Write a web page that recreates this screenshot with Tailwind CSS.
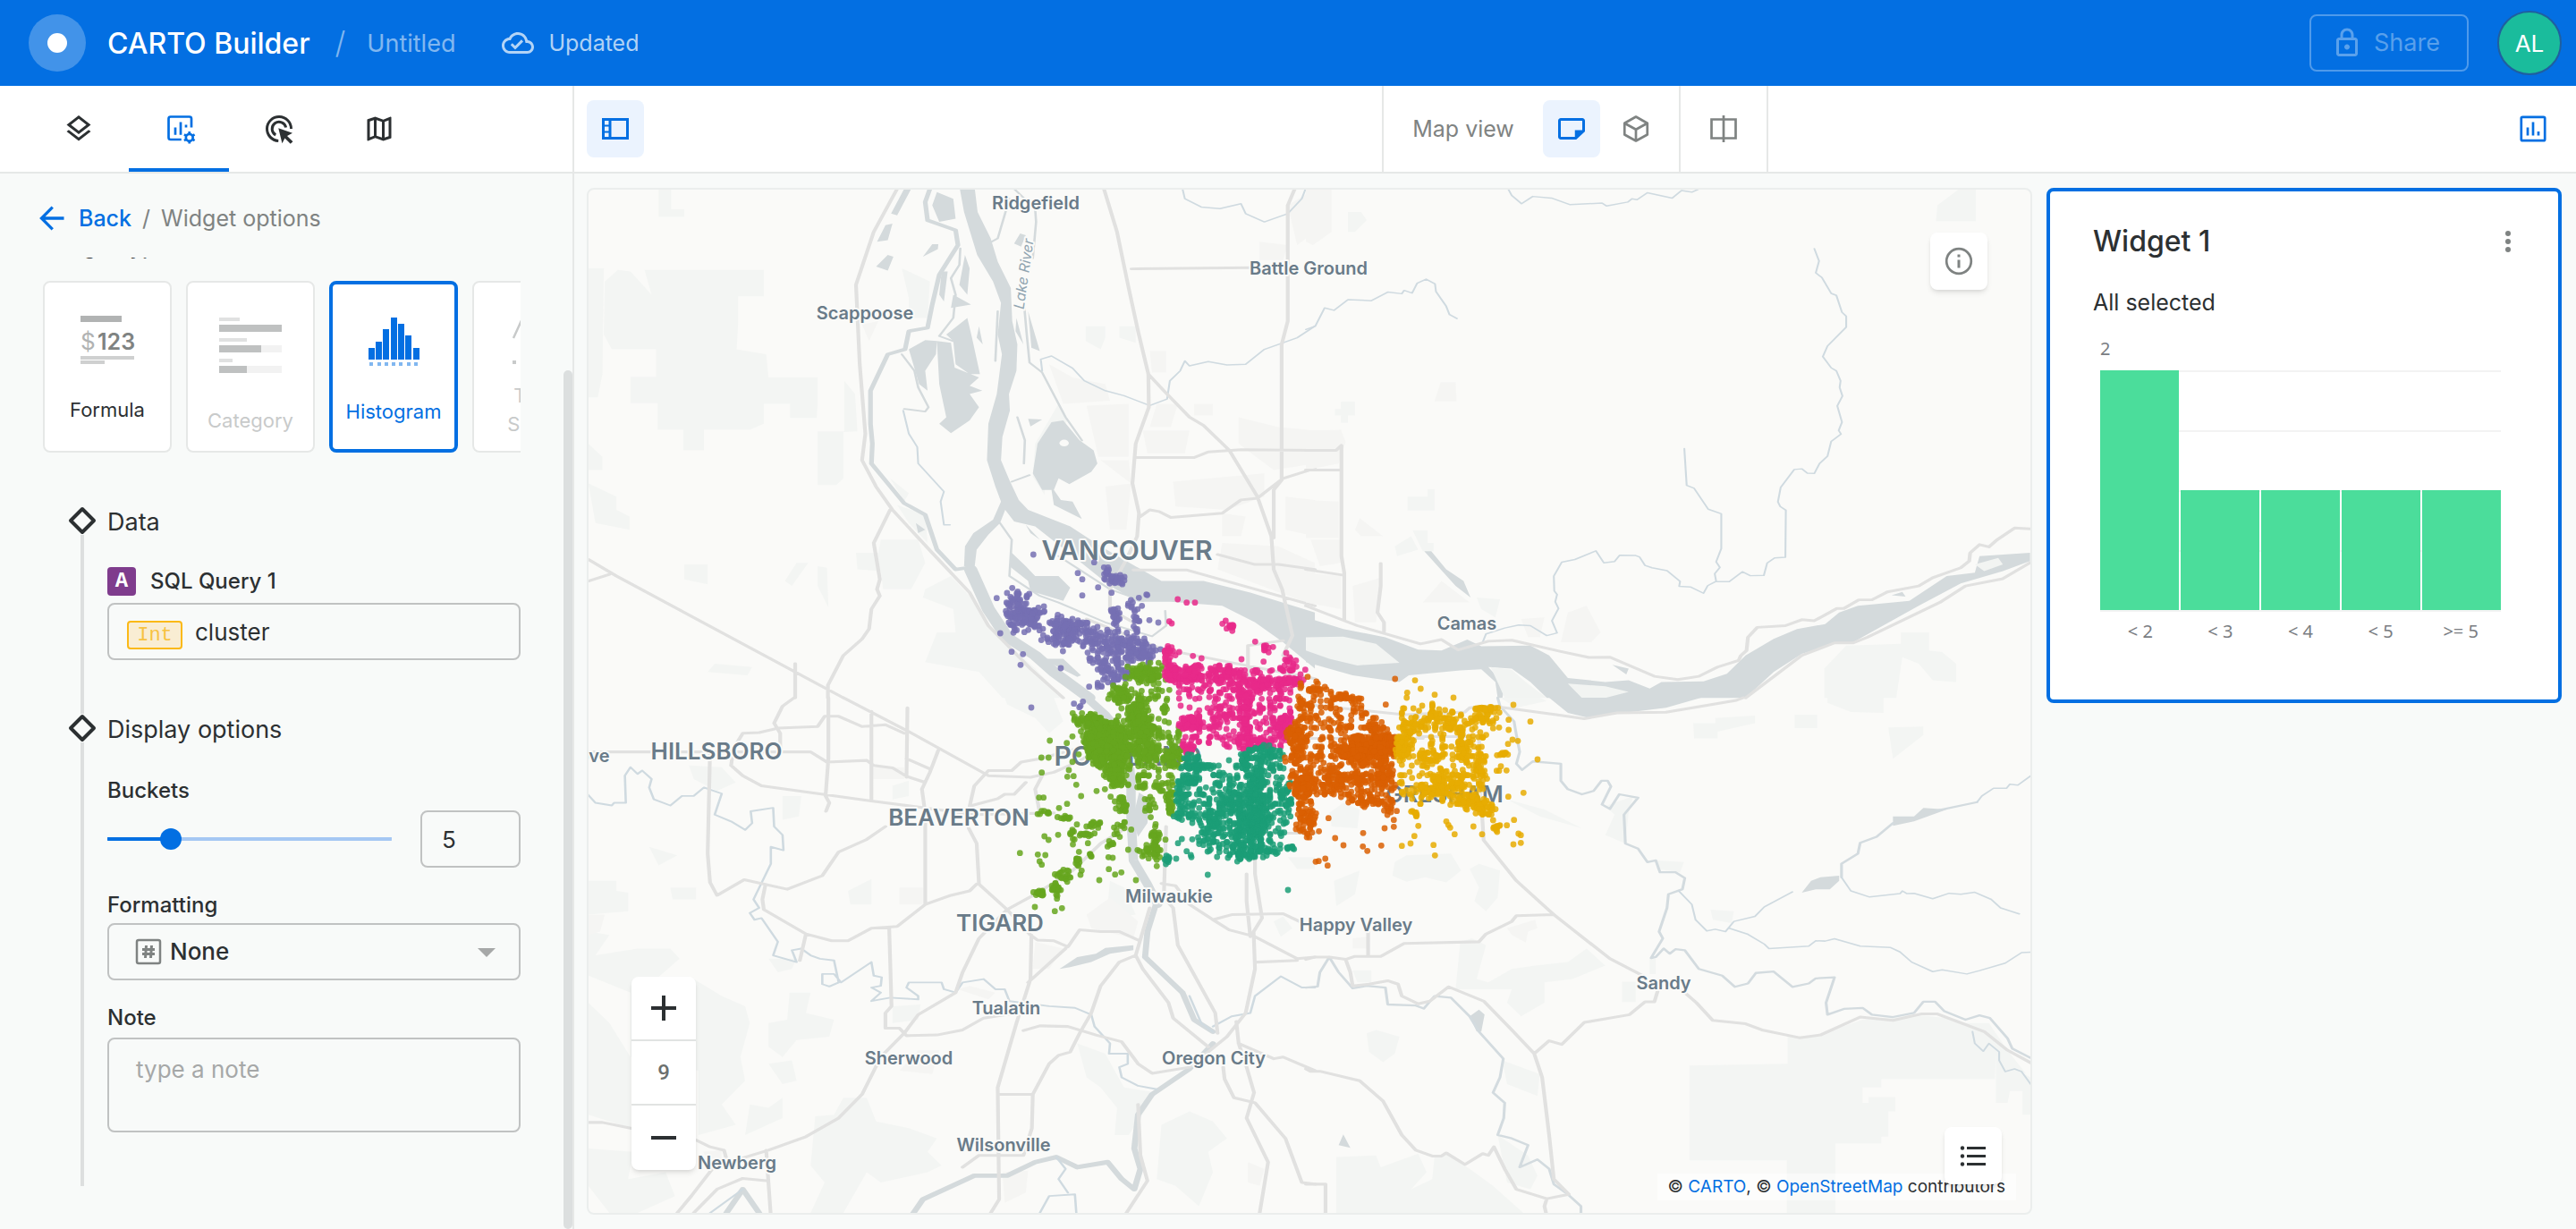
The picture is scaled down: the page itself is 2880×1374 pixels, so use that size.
<!DOCTYPE html>
<html lang="en">
<head>
<meta charset="utf-8">
<title>CARTO Builder</title>
<script src="https://cdn.jsdelivr.net/npm/@tailwindcss/browser@4"></script>
</head>
<body class="flex h-screen min-h-[1374px] flex-col overflow-hidden bg-[#f8faf9] font-['Inter','Liberation_Sans',sans-serif] text-[#2c3032]">

<header class="flex h-24 shrink-0 items-center bg-[#036fe2] pl-8 pr-4 text-white">
  <a href="#" aria-label="CARTO home" class="flex size-16 items-center justify-center rounded-full bg-white/25"><span class="size-[22px] rounded-full bg-white"></span></a>
  <h1 class="ml-6 pt-0.5 text-[32px] font-medium leading-10">CARTO Builder</h1>
  <span class="ml-7 text-[34px] font-light leading-10 text-white/50">/</span>
  <span class="ml-6 pt-0.5 text-[27px] leading-8 text-white/50">Untitled</span>
  <svg class="ml-[52px] size-9 text-white/70" viewBox="0 0 24 24" fill="currentColor"><path d="M19.35 10.04C18.67 6.59 15.64 4 12 4 9.11 4 6.6 5.64 5.35 8.04 2.34 8.36 0 10.91 0 14c0 3.31 2.69 6 6 6h13c2.76 0 5-2.24 5-5 0-2.64-2.05-4.78-4.65-4.96zM19 18H6c-2.21 0-4-1.79-4-4 0-2.05 1.53-3.76 3.56-3.97l1.07-.11.5-.95C8.08 7.14 9.94 6 12 6c2.62 0 4.88 1.86 5.39 4.43l.3 1.5 1.53.11c1.56.1 2.78 1.41 2.78 2.96 0 1.65-1.35 3-3 3zm-9-3.82l-2.09-2.09L6.5 13.5 10 17l6.01-6.01-1.41-1.41z"/></svg>
  <span class="ml-4 text-[25px] leading-8 text-white/70">Updated</span>
  <button type="button" class="ml-auto flex h-16 w-[178px] items-center gap-3 rounded-lg border-2 border-white/30 pl-[22px] text-[27px] text-white/35">
    <svg class="size-9" viewBox="0 0 24 24" fill="currentColor"><path d="M18 8h-1V6c0-2.76-2.24-5-5-5S7 3.24 7 6v2H6c-1.100 0-2 .9-2 2v10c0 1.100.9 2 2 2h12c1.100 0 2-.9 2-2V10c0-1.100-.9-2-2-2zM9 6c0-1.660 1.340-3 3-3s3 1.340 3 3v2H9V6zm9 14H6V10h12v10zm-6-3c1.100 0 2-.9 2-2s-.9-2-2-2-2 .9-2 2 .9 2 2 2z"/></svg>
    Share
  </button>
  <button type="button" aria-label="Account" class="ml-8 flex size-[72px] items-center justify-center rounded-full border-2 border-[#1f5f9f] bg-[#1abc9c] text-[26px]">AL</button>
</header>

<div class="flex min-h-0 flex-1">
  <aside class="relative flex w-[642px] shrink-0 flex-col border-r-2 border-[#e6e8e7]">
    <nav class="flex h-[98px] shrink-0 border-b-2 border-[#e6e8e7] bg-white px-8">
      <button type="button" aria-label="Layers" class="flex w-28 items-center justify-center"><svg class="size-9" viewBox="0 0 24 24" fill="currentColor"><path d="M11.990 18.540l-7.370-5.730L3 14.070l9 7 9-7-1.630-1.270zM12 16l7.360-5.730L21 9l-9-7-9 7 1.630 1.270L12 16zm0-11.470L17.740 9 12 13.470 6.260 9 12 4.530z"/></svg></button>
      <button type="button" aria-label="Widgets" class="flex w-28 items-center justify-center border-b-4 border-[#036fe2] pl-1 pt-1 text-[#036fe2]"><svg class="size-9" viewBox="0 0 24 24" fill="none" stroke="currentColor" stroke-width="1.800"><path d="M20 11V4.500Q20 3 18.500 3H4.500Q3 3 3 4.500V18.500Q3 20 4.500 20H12.500M8 16.500V11M12 16.500V7M16 11V9"/><circle cx="18.500" cy="18.500" r="2.600"/><path d="M18.500 14v2M18.500 21v2M14.600 16.300l1.700 1M20.700 19.700l1.700 1M14.600 20.700l1.700-1M20.700 17.300l1.700-1"/></svg></button>
      <button type="button" aria-label="Interactions" class="flex w-28 items-center justify-center"><svg class="size-9" viewBox="0 0 24 24" fill="none" stroke="currentColor" stroke-width="2"><path d="M11.500 21A9 9 0 1 1 21 12M9.500 16.600A5.200 5.200 0 1 1 17.100 11"/><path d="M11.500 11.500l10.500 3.700-4 2.100 4.300 4.200-1.800 1.700-4.200-4.200-2 3.900z" fill="currentColor" stroke="none"/></svg></button>
      <button type="button" aria-label="Basemap" class="flex w-28 items-center justify-center"><svg class="size-9" viewBox="0 0 24 24" fill="currentColor"><path d="M20.500 3l-.16.030L15 5.100 9 3 3.360 4.900c-.21.070-.36.250-.36.480V20.500c0 .28.220.5.500.5l.16-.030L9 18.900l6 2.100 5.640-1.900c.21-.070.360-.250.360-.480V3.500c0-.28-.22-.5-.5-.5zM10 5.470l4 1.400v11.660l-4-1.400V5.470zm-5 .990l3-1.010v11.700l-3 1.160V6.460zm14 11.080l-3 1.010V6.860l3-1.160v11.840z"/></svg></button>
    </nav>
    <div class="flex h-[94px] shrink-0 items-center pl-10 pt-1.5 text-[25px] leading-8 text-[#7f8382]">
      <svg class="size-9 text-[#036fe2]" viewBox="0 0 24 24" fill="none" stroke="currentColor" stroke-width="2.200"><path d="M21 12H4.500M12.500 3.800L4.300 12l8.200 8.200"/></svg>
      <a href="#" class="ml-3 font-medium text-[#036fe2]">Back</a><span class="mx-3">/</span><span>Widget options</span>
    </div>

    <div class="min-h-0 flex-1 overflow-hidden">
      <div class="ml-12 mr-[58px]">
        <h2 class="-mt-7 text-[24px] font-medium leading-8">Widget type</h2>
        <div class="mt-[22px] flex gap-4 overflow-hidden text-[22px] leading-8">
          <button type="button" class="flex h-48 w-36 shrink-0 flex-col items-center rounded-lg border-2 border-[#e6e8e7] bg-white pt-[34px]">
            <svg class="size-16" viewBox="88 350 64 64"><path fill="#b1b3b3" d="M90 353h46v7H90z"/><path fill="#cfd0d0" d="M90 398h60v4H90zM90 403h27v4H90z"/><text x="90" y="391" font-size="26" fill="#b1b3b3">$</text><text x="109" y="391" font-size="25" font-weight="600" fill="#7f8382">123</text></svg>
            <span class="mt-7">Formula</span>
          </button>
          <button type="button" disabled class="flex h-48 w-36 shrink-0 flex-col items-center rounded-lg border-2 border-[#e6e8e7] bg-white pt-[34px] text-[#c8caca]">
            <svg class="size-20" viewBox="240 350 80 80"><path fill="#e0e1e1" d="M245 355h23v4h-23zM245 378h31v4h-31zM245 401h15v4h-15z"/><path fill="#f2f2f2" d="M245 386h70v8h-70zM245 409h70v8h-70z"/><path fill="#bfc1c1" d="M245 363h70v8h-70zM245 386h47v8h-47zM245 409h31v8h-31z"/></svg>
            <span class="mt-6">Category</span>
          </button>
          <button type="button" aria-pressed="true" class="flex h-48 w-36 shrink-0 flex-col items-center rounded-lg border-4 border-[#036fe2] bg-white pt-8 text-[#036fe2]">
            <svg class="size-16" viewBox="408 350 64 64" fill="currentColor"><path d="M412 389h7v13h-7zM420 382h7v20h-7zM428 368h7v34h-7zM437 355h7v47h-7zM445 362h7v40h-7zM453 375h7v27h-7zM462 389h7v13h-7z"/><path opacity=".5" d="M413 405h4v4h-4zM422 405h4v4h-4zM430 405h4v4h-4zM438 405h4v4h-4zM446 405h4v4h-4zM455 405h4v4h-4zM463 405h4v4h-4z"/></svg>
            <span class="mt-[30px]">Histogram</span>
          </button>
          <button type="button" disabled class="flex h-48 w-36 shrink-0 flex-col items-center rounded-lg border-2 border-[#e6e8e7] bg-white pt-[34px] text-[#c8caca]">
            <svg class="size-16" viewBox="568 350 64 64" fill="none" stroke="currentColor" stroke-width="2.500"><path d="M574 378l10-22 12 14 14-18 14 22"/><path stroke-width="4" stroke-dasharray="4 5" d="M573 405h54"/></svg>
            <span class="mt-3 w-20">Time Series</span>
          </button>
        </div>
      </div>

      <section>
        <div class="mt-[60px] flex h-8 items-center gap-3 pl-[76px]">
          <svg class="size-8" viewBox="0 0 32 32" fill="none" stroke="currentColor" stroke-width="4" stroke-linejoin="round"><path d="M16 3l13 13-13 13L3 16z"/></svg>
          <h3 class="pt-1 text-[27px] leading-8">Data</h3>
        </div>
        <div class="ml-[90px] mr-[58px] border-l-4 border-[#dddfdf] pb-[60px] pl-[26px] pt-9">
          <label for="source" class="flex h-8 items-center gap-4 text-[24px] font-medium"><span class="flex size-8 items-center justify-center rounded bg-[#7f3c8d] font-['Liberation_Mono',monospace] text-[24px] font-bold text-white">A</span>SQL Query 1</label>
          <div class="relative mt-2">
            <span class="absolute left-[22px] top-5 flex h-8 w-[62px] items-center justify-center rounded border-2 border-[#fbb917] bg-[#f9edd3] font-['Liberation_Mono',monospace] text-[22px] text-[#f7c242]">Int</span>
            <input id="source" value="cluster" class="h-16 w-full rounded-lg border-2 border-[#c0c2c2] bg-transparent pl-24 text-[26px]">
          </div>
        </div>
      </section>

      <section>
        <div class="flex h-8 items-center gap-3 pl-[76px]">
          <svg class="size-8" viewBox="0 0 32 32" fill="none" stroke="currentColor" stroke-width="4" stroke-linejoin="round"><path d="M16 3l13 13-13 13L3 16z"/></svg>
          <h3 class="pt-1 text-[27px] leading-8">Display options</h3>
        </div>
        <div class="ml-[90px] mr-[58px] flex flex-col border-l-4 border-[#dddfdf] pb-[60px] pl-[26px] pt-[38px] text-[24px] leading-8">
          <label for="buckets" class="font-medium">Buckets</label>
          <div class="mt-1.5 flex items-center gap-8">
            <input id="buckets" type="range" min="0" max="25" value="5" class="m-0 h-6 flex-1 appearance-none rounded-full bg-[linear-gradient(to_right,#036fe2_70px,#a5c7f3_70px)] bg-[length:100%_4px] bg-center bg-no-repeat [&::-webkit-slider-thumb]:size-6 [&::-webkit-slider-thumb]:appearance-none [&::-webkit-slider-thumb]:rounded-full [&::-webkit-slider-thumb]:bg-[#036fe2]">
            <input aria-label="Bucket count" value="5" class="h-16 w-28 rounded-lg border-2 border-[#c0c2c2] bg-transparent pl-[22px] text-[26px]">
          </div>
          <label for="format" class="mt-[26px] font-medium">Formatting</label>
          <div class="relative mt-1">
            <svg class="absolute left-7 top-[14px] size-9 text-[#7f8382]" viewBox="0 0 36 36" fill="none" stroke="currentColor" stroke-width="2.500"><rect x="5" y="5" width="26" height="26" rx="2"/><path stroke-width="3" d="M15.500 11l-1 14M21.500 11l-1 14M11 15.500h14M11 20.500h14"/></svg>
            <svg class="absolute right-7 top-7 h-2.5 w-5 text-[#a6a8a8]" viewBox="0 0 20 10" fill="currentColor"><path d="M0 0h20L10 10z"/></svg>
            <select id="format" class="h-16 w-full appearance-none rounded-lg border-2 border-[#c0c2c2] bg-transparent pl-[68px] text-[26px] font-medium"><option>None</option></select>
          </div>
          <label for="note" class="mt-[26px] font-medium">Note</label>
          <textarea id="note" placeholder="type a note" class="mt-1.5 h-[106px] resize-none rounded-lg border-2 border-[#c0c2c2] bg-transparent px-[30px] py-[18px] text-[26px] placeholder:text-[#a6a8a8]"></textarea>
        </div>
      </section>
    </div>
    <div class="absolute bottom-0 right-0 top-[318px] w-2.5 rounded-full bg-[#dcdfdf]"></div>
  </aside>

  <main class="flex min-w-0 flex-1 flex-col">
    <div class="grid h-[98px] shrink-0 grid-cols-[1fr_auto_1fr] items-center border-b-2 border-[#e6e8e7] bg-white">
      <button type="button" aria-label="Toggle panel" class="ml-[14px] flex size-16 items-center justify-center rounded-lg bg-[#ebf3fe] text-[#036fe2]"><svg class="size-9" viewBox="0 0 24 24" fill="none" stroke="currentColor" stroke-width="2"><path d="M3 5h18v14H3zM8 5v14"/><path stroke-width="1.300" d="M3.500 9.700H8M3.500 14.300H8"/></svg></button>
      <div class="flex h-24 border-x-2 border-[#e6e8e7] text-[#7f8382]">
        <div class="flex items-center border-r-2 border-[#e6e8e7] pl-8 pr-4">
          <span class="text-[25px] leading-8">Map view</span>
          <button type="button" aria-label="2D view" class="ml-8 flex size-16 items-center justify-center rounded-lg bg-[#ebf3fe] text-[#036fe2]"><svg class="size-9" viewBox="0 0 24 24" fill="currentColor"><path d="M4 4C2.900 4 2 4.900 2 6v12c0 1.100.9 2 2 2h11.500L22 14V6c0-1.100-.9-2-2-2zm0 2h16v7h-5.500v5H4z"/></svg></button>
          <button type="button" aria-label="3D view" class="ml-2 flex size-16 items-center justify-center"><svg class="size-9" viewBox="0 0 24 24" fill="none" stroke="currentColor" stroke-width="1.800" stroke-linejoin="round"><path d="M12 3l8.500 4.800v8.500L12 21l-8.500-4.700V7.800zM3.500 7.800L12 12.500l8.500-4.700M12 12.500V21"/></svg></button>
        </div>
        <button type="button" aria-label="Split view" class="flex w-24 items-center justify-center"><svg class="size-9" viewBox="0 0 24 24" fill="none" stroke="currentColor" stroke-width="1.800"><path d="M3 5h18v14H3zM12 2v20"/></svg></button>
      </div>
      <button type="button" aria-label="Widgets panel" class="mr-[30px] flex size-9 items-center justify-center justify-self-end text-[#036fe2]"><svg class="size-9" viewBox="0 0 24 24" fill="none" stroke="currentColor" stroke-width="1.800"><rect x="3.200" y="3.200" width="17.600" height="17.600" rx="1"/><path d="M8 17v-6M12 17V7M16 17v-3"/></svg></button>
    </div>

    <div class="flex min-h-0 flex-1 gap-4 py-4 pl-[14px] pr-4">
      <section aria-label="Map" class="relative min-w-0 flex-1 overflow-hidden rounded-lg border-2 border-[#ebeeed] bg-[#fafaf8]">
        <svg class="block size-full" viewBox="658 212 1612 1144" preserveAspectRatio="xMidYMid slice" fill="none" stroke-linejoin="round" stroke-linecap="round">
          <!-- north-west -->
          <g transform="translate(650 200) scale(.523 .37)">
            <path fill="#f3f5f3" d="M135 275H390V355H335V435L332 515 395 530 400 600H505V680L503 722H446V680H390V740L360 758H163V678H105V598H160V515H65L48 470 50 310 78 275 105 280 150 350ZM15 270H48L45 590 35 660H15ZM505 763H590L560 765V905L545 925H505ZM218 758H262V820H218ZM165 30H192V92H220V115H165ZM562 610L585 650 590 763H562ZM15 800L45 840V880H15ZM15 920L75 960V1000L103 1020V1060L30 1040ZM685 270L745 310 740 420H700V360ZM587 1130L635 1130 640 1090 720 1090 735 1160 705 1240H645L640 1185 590 1180ZM220 1165H270V1225L220 1210ZM435 1215L460 1160 485 1160 450 1230ZM505 1170L525 1175 528 1295 505 1230ZM735 1240L790 1200 830 1260 870 1350 970 1480 1030 1568H900L850 1490 735 1460 760 1370 800 1370 795 1300 730 1265ZM270 1490L285 1465 365 1475 355 1500ZM965 900L970 800 1020 680 1040 730 1000 800 990 955ZM1078 445H1120V480L1110 515 1078 490ZM1150 445H1185V495L1150 480ZM660 905L700 950 690 975ZM675 985L735 1015 740 1100 700 1040Z"/>
            <path fill="#f5f5f3" d="M1080 685L1170 680V840H1105ZM1310 680H1350V715H1310ZM1265 915L1460 890V960L1380 1000 1270 990ZM1200 760H1300L1290 830H1210ZM1405 720L1490 750 1568 760V860L1480 880 1405 800ZM1505 960L1568 970V1080L1505 1060ZM1370 1100L1490 1110 1568 1160V1290L1360 1180ZM1120 930L1175 920 1165 1060H1130ZM1510 80L1568 30V160L1530 200ZM1450 190L1510 200 1500 245H1450ZM1000 560L1050 600 1120 620 1130 670 1030 680ZM1215 520H1250V585H1220ZM1110 850H1170L1175 920ZM600 440L635 430 615 490ZM1370 1010L1420 1020 1410 1080H1370ZM1230 680H1275L1260 750H1215Z"/>
            <path fill="#d4dadc" d="M809 30L818 100 846 230 880 310 897 375 890 470 899 530 888 650 870 740 867 850 885 930 897 975 880 1030 838 1070 820 1110 818 1170 840 1180 845 1120 870 1075 895 1040 906 1000 925 1035 970 1050 1060 1150 1130 1230 1190 1278 1260 1278 1370 1290 1440 1340 1500 1400 1568 1480V1310L1430 1250 1330 1215H1240L1110 1110 1045 1050 955 1000 935 970 915 910 897 850 900 780 916 700 914 650 930 580 932 500 921 430 918 330 890 250 875 180 847 100 841 30ZM1005 735L1030 730 1065 790 1095 820 1103 860 1090 885 1043 922 1020 905 1010 940 1025 970 1050 975 1070 1028 1010 985 1005 940 985 940 965 890 975 800ZM760 490L790 495 798 570 850 600 830 625 857 640 830 650 850 690 830 730 790 768 765 740 780 720 765 620ZM780 470L825 420 835 480 852 590 830 590 800 560 795 490ZM655 230L667 235 655 277 630 265ZM700 515L735 487 760 490 758 530 735 580 740 640 722 620ZM955 400L980 520 962 510ZM930 420L945 500 928 460ZM770 280L783 280 775 370 765 350ZM820 230L830 270 825 350 808 320ZM850 445L858 500 845 480ZM730 235L750 197H763L762 212ZM690 30H705L675 110 662 105ZM665 135L655 185 632 190 650 140ZM760 40L795 60 800 120 765 130 750 80ZM925 195L938 165 950 170 940 205ZM920 1130L950 1170 970 1200 1020 1200 1045 1235 1030 1275 960 1245 955 1215 915 1170ZM950 1045L980 1090 960 1070ZM955 725L985 727 960 748ZM795 350L833 380 790 390ZM985 1450L1030 1450 1068 1500 1060 1505ZM715 1040L735 1060 720 1070Z"/>
            <circle cx="1032" cy="798" r="10" fill="#fafaf8"/>
            <g stroke="#d4dadc" stroke-width="10"><path d="M745 30L735 70 740 125 800 155 805 200 765 290 750 380 740 450 700 460 692 515 655 530 618 640V740L622 800 620 860 690 980 735 1015 760 1120 800 1180 825 1175"/><path stroke-width="28" d="M832 1180L870 1300 910 1385 970 1440 1010 1490 1085 1568"/><path stroke-width="5" d="M810 210L808 260 790 300 800 350 795 420 765 475 795 490M685 530L712 580 720 630 742 690 735 703 690 695M915 60L890 180 870 195M925 30L970 90 972 130 965 240M947 390L952 470 958 555 985 585 1035 720 1070 790M890 400L885 550M932 720L948 790 946 860M920 915L958 895M895 1040L920 1090 915 1200 980 1260 1020 1280 1120 1340 1220 1382 1250 1350 1248 1305M1020 1140L1130 1240 1200 1275"/></g>
            <g stroke="#cfdae0" stroke-width="4"><path d="M688 700L700 770 718 810 720 860 775 945 768 975 775 1045H788M1285 30L1290 60 1325 85 1365 90 1410 75 1420 105 1460 130 1510 105 1540 60 1548 30M985 580L982 545 1005 535 1050 572 1075 610 1120 640 1160 655 1215 685 1252 665 1258 610 1280 580 1290 550 1300 565 1340 552 1380 562 1420 560 1460 515 1530 480 1568 445"/></g>
            <g stroke="#e1e1e0" stroke-width="8"><path d="M1117 30L1145 160 1170 330 1190 460 1212 590 1213 690 1185 800 1178 920 1192 1010 1188 1080 1165 1150 1130 1240 1130 1300 1180 1340M1212 590L1245 640 1300 720 1330 745 1385 820 1445 960 1475 1080 1480 1180 1498 1240 1520 1380 1500 1440M1176 272L1430 268M1525 30L1510 80V430L1497 500V910L1480 940V1085M1185 842H1310L1340 825 1410 818 1568 820M1195 1020L1215 1000 1235 1005 1260 1023 1370 1010 1410 970 1445 965 1500 905 1568 875M675 30L625 160 587 320 595 560 607 770 600 850 630 930 665 1000 750 1130 830 1250 870 1350 960 1480 1030 1568M660 1000L625 1100 638 1210 632 1240 638 1260 620 1300 615 1360 600 1390 560 1440 527 1530V1568M15 1150L75 1200 560 1568M15 1215L60 1195M457 1465V1568M1360 1135L1440 1165H1490L1568 1180M1180 1182H1295L1568 1290M1080 1330L1240 1420 1420 1470 1568 1510M1425 1500V1410L1500 1395"/></g>
          </g>
          <!-- north-east -->
          <g transform="translate(1460 200) scale(.523 .37)">
            <path fill="#f3f5f3" d="M1108 1480L1155 1410 1272 1405V1370H1332V1425L1360 1430 1390 1465V1520L1340 1515 1310 1465 1275 1445 1262 1568H1108ZM217 960H260V938H275V1002H217ZM1347 128L1350 80 1395 32H1432V128ZM90 100H118L130 125 105 160H90ZM365 1265L415 1270 405 1325 375 1300ZM62 695H75V673H105V715H90V737H75V715H62ZM190 1110L225 1080 240 1120 195 1140ZM228 1062H260V1100H273V1125H250Z"/>
            <path fill="#f5f5f3" d="M0 760L75 758 85 795 70 860 0 880ZM0 970L70 975V1085H0ZM10 1090H75V1160L30 1170ZM0 1190L75 1200V1300L0 1280ZM275 672L288 614H320L322 672ZM545 1400L560 1310 600 1290 630 1370 610 1400 545 1400ZM0 32H55V160L15 200 0 190ZM105 1060L115 1025 165 1080H118ZM100 1230L160 1205 150 1340H105ZM250 1280L290 1215 350 1280ZM460 1330L510 1325 500 1385H475Z"/>
            <path fill="#d4dadc" d="M0 1325L80 1360 170 1385 240 1422 290 1425 345 1392 375 1412 480 1410 520 1440 560 1508 640 1520 690 1515 735 1540 760 1520 850 1518 900 1495 940 1440 1000 1390 1050 1360 1110 1345 1140 1310 1180 1290 1290 1275 1370 1200 1430 1190 1440 1140 1548 1130V1155L1490 1185 1400 1222 1310 1290 1170 1400 1130 1405 1060 1435 1000 1490 940 1568H515L480 1520 440 1480 390 1475 425 1530 420 1568H410L405 1520 375 1482 330 1485 220 1500 200 1520 100 1500 0 1460ZM253 1125H268L300 1180 337 1215 352 1265 320 1230ZM1252 1258L1275 1248 1282 1262ZM655 1468L690 1480 685 1497Z"/>
            <path fill="#f2f4f2" d="M0 1385L80 1383 150 1405 200 1462 110 1470 50 1450 0 1425ZM560 1525L640 1533 690 1550 640 1568H590ZM1430 1165L1480 1145 1490 1165 1450 1185ZM395 1475L440 1483 470 1520 515 1568H425Z"/>
            <path stroke="#cfdae0" stroke-width="4" d="M0 455L20 445 40 390 60 397 90 365 140 368 175 342 205 347 210 337 227 345 238 315 257 303 276 317 278 340 300 385 307 410 323 422M433 32L440 50 461 75 485 53 525 58 565 78 633 73 643 82 688 70 697 60 708 63 730 42 783 58 803 35 825 40 838 32M1087 211L1097 248 1090 284 1103 298 1123 346 1134 352 1146 403 1155 415V448L1115 505 1105 537 1123 571 1134 580 1143 610 1141 630 1147 656 1136 686 1146 735 1139 760 1144 771 1123 793 1115 838 1098 860 1087 890 1072 889 1060 876 1044 878 1015 932 1009 976 1014 990 1026 1001 1025 1143 1002 1145 986 1161 979 1198 950 1199 933 1187 905 1217 877 1216 859 1229 850 1252 822 1233 798 1231 800 1216 772 1184 740 1175 725 1168 713 1142 705 1138 671 1137 660 1156 637 1160 620 1124 575 1150 547 1158 530 1200 531 1245 537 1256 533 1278 540 1298 526 1335 537 1372 515 1380 480 1350 455 1348 425 1357 385 1375 378 1400M809 815L814 926 830 935 860 998 888 1012V1117L877 1157 885 1174 874 1193 877 1216"/>
            <path stroke="#e1e1e0" stroke-width="8" d="M0 820H65L76 805V1140L82 1190V1335M0 880H76M0 1180L78 1197M160 1162V1230L153 1310 167 1340V1368M0 1290L110 1350 245 1405 290 1392 325 1423 390 1397 440 1394 545 1428 605 1446 650 1445 745 1503 795 1513 840 1503 880 1475 925 1455 930 1440 942 1425 945 1385 965 1355 1025 1350 1060 1332 1087 1335 1135 1298H1150L1182 1272H1210L1243 1248 1310 1230 1340 1205 1400 1175 1418 1155 1420 1130 1440 1105 1460 1112 1478 1090 1515 1055 1560 1058M1560 1150L1490 1208 1410 1230 1355 1280 1200 1385 1170 1402H1130L1060 1440 940 1568"/>
          </g>
          <!-- south-west -->
          <g transform="translate(650 780) scale(.523 .379)">
            <path fill="#f3f5f3" d="M15 540L75 540 75 570 100 575V630L15 640ZM500 1235L540 1230 560 1180 610 1180 630 1250 700 1270 760 1300 740 1340 770 1380 740 1400 640 1430 610 1400 560 1520H490L520 1430 490 1380ZM15 690L60 700 30 760 120 740 190 740 210 770 160 830 240 830 300 880 350 910 360 960 340 1060 350 1130 300 1200 330 1260 250 1290 250 1100 105 1060 105 870 15 820ZM15 900L60 960 105 1060V1270L15 1230ZM445 870L490 870 480 930 540 950 530 1000 460 1010 430 1060 400 1030 400 960 440 950ZM400 1080L450 1070 460 1130 430 1140ZM360 1200L400 1210 430 1180 430 1240 350 1290ZM15 1330L110 1340 100 1420 180 1400 200 1470 120 1520H60L15 1440ZM1060 1020L1120 1050 1160 1150 1230 1165 1170 1290 1140 1290 1145 1210 1110 1150 1080 1120ZM1130 540L1160 560 1185 640 1140 650 1125 610ZM1240 1260L1300 1220 1350 1250 1380 1300 1340 1340 1350 1400 1320 1500 1270 1440 1230 1420ZM230 200L300 205 330 250 290 275 240 240ZM665 260L700 245V290L665 300ZM905 0H1010L1030 70 1000 105 970 60 910 20ZM145 440L205 465 165 495ZM570 570L620 535V610H575ZM665 910L725 905 720 950 665 960ZM190 560H245V595H195ZM430 290L470 290 465 350 430 360ZM400 770L460 770 450 800 420 810ZM1480 660L1500 645 1520 680 1495 705ZM1510 470H1568V505H1530Z"/>
            <path fill="#f5f5f3" d="M680 560H730V610H680ZM1080 640L1130 590 1190 660 1180 710 1090 680ZM680 1100L720 1040 765 1040 750 1110ZM900 1400L955 1395 950 1460 905 1490ZM970 720L1030 740 1000 800 965 800ZM620 205H690V240H620ZM805 860L830 850 885 870 870 890ZM15 640H50L40 690 15 700ZM1425 1370L1460 1390 1450 1440 1425 1430ZM260 1340L300 1335V1360L270 1360Z"/>
            <path fill="#d4dadc" d="M1022 800L1060 765 1100 755 1120 738 1180 730V745L1130 755 1090 780 1045 795ZM1192 280L1215 300 1210 370 1190 410 1178 360Z"/>
            <path stroke="#d4dadc" stroke-width="20" d="M1080 0L1120 50 1150 100 1168 150 1175 250 1175 350 1180 480 1210 550 1232 610"/>
            <path stroke="#d4dadc" stroke-width="13" d="M1228 610L1210 690 1205 765 1285 870 1310 950 1350 985M1350 1020L1300 1095 1220 1170 1190 1230 1182 1330 1195 1390 1182 1450 1155 1420 1125 1370 1060 1385 1015 1355 970 1370 910 1410H840L730 1480 705 1530M310 1520L345 1450 380 1520"/>
            <path stroke="#cfdae0" stroke-width="5" d="M10 280L30 310 65 318 70 310H95L93 230 105 205 120 225 130 215 150 240 145 265 155 300 190 318 215 290 240 290 262 265 300 283 285 345 320 365 350 390 365 370 362 335 410 325 412 380 430 405 432 450 405 440V490L368 595 380 620 360 635 370 655 385 650 420 720 410 760 460 780 450 745 470 740 490 760 510 770 540 775 550 840 530 852 515 845V815H540L555 840 620 780 625 820 642 825 640 850 620 855 640 870 620 895 660 885 720 890V880L695 855 700 840H770L775 860 800 870 815 840 860 830 885 860 905 860 915 895 1000 910 1055 915 1090 935 1097 970 1130 1020 1128 1050 1168 1050V1080L1150 1090 1155 1120 1190 1145 1230 1155M1568 855H1540L1495 822 1440 880 1430 930 1390 940 1350 970M345 1450L275 1520M980 1520L1000 1470 1055 1465 1058 1520M1015 1355L1035 1390 1020 1420 1040 1460M1350 985L1325 960 1300 880"/>
            <path stroke="#e1e1e0" stroke-width="8" d="M15 160H490L525 190 610 185 625 200 665 207 695 232 735 250M275 160L270 460 275 545 290 583 348 537 440 565 515 525 550 455 610 418 650 380M455 0L430 25 412 75 425 105V150M320 200L325 150 345 105 380 103 420 90 505 85 520 55 550 55 600 85 650 80 690 105M320 200L345 230 385 260 620 305 735 325 840 345 1010 340M528 0V180L522 290 530 310 523 335M560 0L700 100 870 230 960 235 1010 220 1060 190 1110 150M620 40V300M697 30L695 235M763 155L745 220 728 270 735 340V610M695 180L745 210M870 215H920L940 190 980 180 1060 150M830 320L840 260 870 215M830 320L890 298 905 285H925L950 250M985 230L970 270 980 340M828 385L845 430 850 550 910 625 960 700 975 715 1010 717 1040 735 1065 685 1110 690 1150 690 1190 715M1170 380L1110 430 1050 510 970 580 910 625 850 710 815 810 800 870 720 935 690 990 640 1060 600 1170 550 1240 480 1295 400 1335 340 1360M735 610L790 583 830 570 845 550M735 610L675 675 620 680 570 717H535L480 697 390 625 387 595 393 555M480 697L467 775M658 680L663 910 650 930V975H680L695 997 760 995 815 980 860 945 930 930M962 700L960 830 930 960 890 1150 893 1480 875 1520M890 1170H965L1000 1080 1020 1055 1045 1045 1065 990 1090 930 1110 850 1150 780 1185 760M965 1170L963 1270 945 1350H850L815 1385M945 982L980 968 1040 970 1100 995 1155 1015 1190 1080 1220 1108 1300 1090 1380 1000 1420 930 1440 800 1437 690 1455 650 1440 520 1440 400M955 840L1035 740M1185 760L1200 800 1255 900 1265 945 1300 985 1340 1030M1240 548L1270 555 1300 610 1350 655 1390 640 1500 637 1535 660M1250 380L1245 590 1265 620 1275 730 1355 930 1360 990M1215 620L1185 760M1350 655L1385 685 1440 705 1530 770 1568 765M1445 780L1530 775M1422 520V600L1430 705M1400 955L1405 1020 1420 1080 1438 1165 1422 1240 1468 1370 1450 1520M1372 1090L1375 1125 1395 1180 1440 1195 1505 1300 1540 1430 1568 1435M1405 1020L1480 1065 1500 1060 1568 1100M1190 1200L1195 1350 1210 1425 1165 1520M10 1253H45L105 1270M245 1305L275 1325 305 1335 310 1360M395 1335L405 1530M280 1390L235 1470 205 1520M240 1520L290 1450 345 1418 395 1425M1470 0L1475 180 1460 400 1568 400"/>
          </g>
          <!-- south-east -->
          <g transform="translate(1460 780) scale(.523 .379)">
            <path fill="#f3f5f3" d="M820 1085L1030 1080V1000L1090 998 1190 950 1300 935 1370 945 1440 980 1475 1040 1473 1125H1230V1150H1190V1195H1203V1178H1260V1220H1245V1295H1230V1315H1132V1520H1028V1365H820ZM1475 1045L1530 1105 1560 1130V1230H1532V1160H1505L1500 1195H1475ZM828 75L875 75V60L960 53 960 75 880 100V120H830ZM1245 88L1320 85 1320 110 1255 180ZM215 465L310 460 332 510 300 545 255 530 215 543 185 525 190 485ZM350 505L370 490 415 510 410 590 385 630 360 600 370 560ZM330 720L355 710 385 730 365 830 390 840 440 800 490 790 560 780 600 740 640 790 570 830 510 840V900L460 940 430 900 440 860 320 860ZM65 1355L150 1350 160 1385 240 1345 258 1400 225 1450 270 1420 275 1355 300 1345 350 1390 400 1440 465 1520H65ZM1115 0H1235V45L1165 42 1115 15ZM1045 50H1093V90H1045ZM865 625L915 630 910 665 870 655ZM750 480L808 485 800 515 750 505ZM640 320L700 290 690 340 683 430 640 405 660 345ZM50 340L80 310 115 330 110 385 55 380ZM130 990L150 980 200 1000 190 1050 165 1075 135 1045ZM420 1070L500 1110 495 1175 430 1140ZM60 540L115 510 105 580 65 615ZM415 0H500L515 10 450 30ZM410 1290L475 1350 495 1410 480 1450 430 1430ZM735 770H748V815H735ZM430 300L510 330 590 385 500 350ZM100 805L140 805 140 840 110 840ZM1400 960L1460 960 1500 1040 1540 1110 1470 1050 1430 1020ZM676 838H705V898H676Z"/>
            <path fill="#f5f5f3" d="M430 680L490 655 495 680 475 690 470 722 440 700ZM100 710L130 705V740H100Z"/>
            <path fill="#d4dadc" d="M520 0L560 45 600 58 660 48 770 30 845 0ZM1255 350H1300L1320 325 1370 330 1300 365 1255 378ZM1060 575L1080 540 1100 530 1140 525V540L1120 565H1090ZM70 1320L80 1288 95 1328ZM350 940L370 920 382 935 375 985 365 985Z"/>
            <path stroke="#d3dbdf" stroke-width="6" d="M410 0L415 25 445 70 450 110 457 160 450 195 462 213 485 188 545 195V245L560 270 590 285 615 275 632 245 645 245 652 262 633 315 650 328 670 285 710 295 680 345 683 430 710 445 730 485 748 480 757 515 790 515 810 532 805 565 775 580 772 620 755 690 763 710 738 768 748 765 765 740 778 755 790 742 810 745 840 800 890 820 917 853 945 843 962 812 1000 808 1040 853 1075 843 1090 828 1130 825 1112 900 1115 935 1150 918 1190 915 1210 935 1255 942 1300 930 1320 897 1345 897 1365 925 1410 950 1440 937 1462 945 1500 1005 1510 1035 1560 1070M0 855L25 852 30 810 50 765 70 810 100 857 130 850 170 855 175 905 235 908 252 917 275 880 310 885 350 940 370 985 422 1065 415 1120 400 1165 425 1195 423 1240 410 1290 440 1300 475 1320 457 1385 495 1362 520 1390 530 1435 560 1465 588 1500V1530M1145 530V490L1180 460 1185 428 1220 410 1255 370M1350 333L1435 308"/>
            <path stroke="#cfdae0" stroke-width="4" d="M797 570L825 610 833 655 857 688 875 683 897 690 915 660 960 645 980 617 1040 573M905 680L945 698 980 727 990 740 1075 733 1090 717 1110 718 1130 711 1185 733 1250 737 1270 750 1295 780 1340 808 1360 803 1413 815 1440 805 1495 783 1530 752 1560 750M1435 308L1445 290 1470 267H1498L1505 255 1522 258 1560 220M1145 530L1165 570 1205 588 1270 578 1275 570 1285 578 1300 577 1340 593 1375 577 1400 580 1430 574 1465 595 1485 620 1525 638M1425 985L1430 1020 1448 1043 1460 1020 1482 1045V1070L1495 1103 1515 1095 1530 1103 1560 1160"/>
            <path stroke="#e1e1e0" stroke-width="8" d="M935 0L920 8 770 43 665 45 595 62 535 50 400 25 350 30 340 42 210 50 0 20M376 330L380 420 450 540 530 640 650 770 720 820M810 870L835 900 870 952 940 962 975 980 1055 1003 1100 995 1185 942 1255 952 1315 933H1350L1450 985 1500 1040 1560 1085M530 640L450 643 440 660 385 697 370 720 210 725 160 763H105L85 772 50 765H20L0 772M133 680V763M85 772L95 810 100 850 135 845 175 835 197 845 205 880 240 903 265 895 305 853 380 895 440 980 488 1050 505 1120 520 1290 530 1420 562 1465 515 1478 510 1500 515 1530M488 1050L520 1012 547 1023 595 958 692 935 725 897H745L752 865M0 1095L10 1102H30L115 1130 165 1190 205 1290 235 1335 270 1352H290L300 1343 340 1377 378 1345 390 1350 402 1325 425 1390 450 1450 515 1478M0 1435H42V1530M240 40V115H370L376 330M0 120L250 120"/>
          </g>
          <g font-family="Inter, sans-serif" fill="#697b89" stroke="#fafaf8" stroke-width="4" paint-order="stroke" text-anchor="middle" font-weight="600" font-size="20">
            <text x="1158" y="234">Ridgefield</text>
            <text x="1463" y="307">Battle Ground</text>
            <text x="967" y="357">Scappoose</text>
            <text x="1640" y="704">Camas</text>
            <text x="1307" y="1009">Milwaukie</text>
            <text x="1516" y="1041">Happy Valley</text>
            <text x="1125" y="1134">Tualatin</text>
            <text x="1016" y="1190">Sherwood</text>
            <text x="1357" y="1190">Oregon City</text>
            <text x="1122" y="1287">Wilsonville</text>
            <text x="824" y="1307">Newberg</text>
            <text x="1860" y="1106">Sandy</text>
            <text x="664" y="852">ove</text>
            <g font-size="26"><text x="801" y="849">HILLSBORO</text><text x="1072" y="923">BEAVERTON</text><text x="1118" y="1041">TIGARD</text><text x="1615" y="897">GRESHAM</text></g>
            <g font-size="30"><text x="1260" y="626">VANCOUVER</text><text x="1261" y="856">PORTLAND</text></g>
            <text transform="translate(1150 307) rotate(-82)" font-size="16" font-weight="400" font-style="italic" fill="#90a4b0">Lake River</text>
          </g>
          <g id="points" fill-opacity=".85"></g>
        </svg>

        <button type="button" aria-label="Information" class="absolute right-12 top-12 flex size-16 items-center justify-center rounded-lg bg-white text-[#7f8382] shadow-md"><svg class="size-9" viewBox="0 0 24 24" fill="none" stroke="currentColor" stroke-width="1.800"><circle cx="12" cy="12" r="9.200"/><path stroke-width="2" d="M12 11v6M12 7v2"/></svg></button>
        <div class="absolute bottom-12 left-12 flex w-[72px] flex-col overflow-hidden rounded-lg bg-white shadow-md">
          <button type="button" aria-label="Zoom in" class="flex h-[70px] items-center justify-center"><svg class="size-7" viewBox="0 0 28 28" stroke="currentColor" stroke-width="4"><path d="M0 14h28M14 0v28"/></svg></button>
          <span class="flex h-[74px] items-center justify-center border-y-2 border-[#e1e3e2] font-[Roboto,sans-serif] text-[24px] font-medium text-[#6b6f6e]">9</span>
          <button type="button" aria-label="Zoom out" class="flex h-[72px] items-center justify-center"><svg class="size-7" viewBox="0 0 28 28" stroke="currentColor" stroke-width="4"><path d="M0 14h28"/></svg></button>
        </div>
        <p class="absolute bottom-[14px] right-4 flex h-[30px] items-center whitespace-pre bg-white/50 px-3 text-[19px]">© <a href="#" class="text-[#036fe2]">CARTO</a>, © <a href="#" class="text-[#036fe2]">OpenStreetMap</a> contributors</p>
        <button type="button" aria-label="Legend" class="absolute bottom-8 right-8 flex size-16 items-center justify-center rounded-lg bg-white shadow-md"><svg class="size-9" viewBox="0 0 36 36" fill="currentColor"><path d="M11 8h21v3H11zM11 17h21v3H11zM11 26h21v3H11z"/><circle cx="6" cy="9.500" r="2.200"/><circle cx="6" cy="18.500" r="2.200"/><circle cx="6" cy="27.500" r="2.200"/></svg></button>
      </section>

      <article class="h-[576px] w-[576px] shrink-0 rounded-lg border-4 border-[#036fe2] bg-white px-12 pt-9">
        <div class="flex items-center justify-between">
          <h2 class="text-[32px] font-medium leading-10">Widget 1</h2>
          <button type="button" aria-label="Widget menu" class="-mr-1 flex h-10 w-6 items-center justify-center text-[#7f8382]"><svg class="h-6 w-2" viewBox="0 0 8 24" fill="currentColor"><circle cx="4" cy="3" r="3"/><circle cx="4" cy="12" r="3"/><circle cx="4" cy="21" r="3"/></svg></button>
        </div>
        <p class="mt-8 text-[25px] leading-8">All selected</p>
        <div class="ml-2 mr-4 mt-[22px] font-['Noto_Sans',sans-serif] text-[20px] leading-7 text-[#7a7d82]">
          <div class="h-7">2</div>
          <div class="mt-2.5 flex h-[270px] items-end gap-0.5 border-b-2 border-[#f3f3f3] bg-[linear-gradient(to_bottom,#f3f3f3_2px,transparent_2px)] bg-[length:100%_67px]">
            <div class="h-full flex-1 bg-[#4bdd9b]"></div><div class="h-1/2 flex-1 bg-[#4bdd9b]"></div><div class="h-1/2 flex-1 bg-[#4bdd9b]"></div><div class="h-1/2 flex-1 bg-[#4bdd9b]"></div><div class="h-1/2 flex-1 bg-[#4bdd9b]"></div>
          </div>
          <div class="mt-2 grid grid-cols-5 text-center"><span>&lt; 2</span><span>&lt; 3</span><span>&lt; 4</span><span>&lt; 5</span><span>&gt;= 5</span></div>
        </div>
      </article>
    </div>
  </main>
</div>

<script>
// Listings on the map, one entry per cluster. Coordinates are in thirds of a map unit from 1080,600.
// blobs: [x, y, radiusX, radiusY, count]
const clusters = [
  {color:'#7570b3', n:190,
   area:[[130,190],[190,175],[300,245],[450,290],[570,330],[660,380],[620,420],[560,450],[540,480],[490,515],[430,515],[450,470],[400,400],[380,360],[330,390],[270,370],[230,340],[160,325],[130,300]],
   blobs:[[165,250,32,70,55],[220,270,50,45,45],[320,320,50,50,85],[385,310,50,30,35],[505,145,38,18,26],[475,120,15,25,12],[500,265,15,34,26],[570,290,14,45,14],[555,230,20,25,8],[480,360,90,40,60],[570,380,50,45,40],[500,450,60,50,45],[600,390,50,15,20]],
   dots:[226,60,430,86,375,122,390,143,390,197,103,206,115,324,153,386,191,394,183,430,318,441,219,573,413,503,453,500,362,560,380,572,392,553,384,568,645,288,615,280,608,196,590,232,443,170,488,188,605,194,580,205,155,172]},
  {color:'#66a61e', n:300,
   area:[[540,480],[600,430],[640,410],[665,430],[680,500],[640,540],[600,590],[720,620],[720,700],[735,740],[700,800],[690,940],[650,850],[600,800],[540,850],[500,850],[470,820],[400,720],[385,640],[420,590],[500,620],[520,580],[480,520]],
   blobs:[[475,700,72,80,400],[430,640,40,45,90],[505,800,35,45,60],[580,600,36,60,110],[600,650,60,35,60],[600,710,55,50,90],[690,740,40,40,50],[600,460,60,35,75],[520,530,40,35,40],[520,905,25,35,30],[520,980,30,30,12],[590,840,18,18,12],[615,900,22,40,14],[650,840,18,18,10],[685,890,12,55,30],[637,1030,18,65,40],[600,1060,25,25,14],[330,1135,35,22,18],[300,1180,18,25,20],[250,1195,30,16,16],[375,1090,12,18,12],[410,1000,28,12,12],[355,1010,12,30,10],[325,940,32,8,10],[260,925,22,12,8],[435,965,28,12,12],[375,615,22,20,12],[668,570,14,26,10],[480,1030,22,10,7],[415,1070,8,8,4]],
   dots:[358,592,389,592,281,684,253,741,277,741,254,791,338,692,357,670,378,730,357,755,345,783,340,805,361,803,370,832,386,870,245,875,260,875,312,910,339,896,438,853,466,847,485,872,372,965,404,972,309,1000,263,1005,277,1017,409,1028,181,1061,241,1066,266,1068,247,1089,254,1100,379,1057,544,1050,478,1075,492,1077,479,1115,500,1133,521,1126,447,1152,570,1152,640,1105,669,1016,384,1134,388,1120,305,1214,231,1242,298,1256,322,1246,682,514,665,590,650,1075]},
  {color:'#e7298a', n:380,
   area:[[655,385],[690,370],[720,430],[800,440],[860,415],[960,450],[1080,420],[1120,480],[1090,550],[1090,660],[1060,705],[940,720],[800,690],[730,730],[710,640],[720,610],[800,560],[700,520],[670,480]],
   blobs:[[690,460,26,28,45],[675,390,16,18,12],[760,460,45,35,50],[860,460,55,35,55],[755,625,38,26,65],[748,715,15,16,20],[935,520,30,60,40],[1000,495,55,24,45],[1080,485,50,16,40],[940,620,15,75,45],[1060,640,35,50,60],[850,610,45,45,25],[960,690,70,20,40],[882,300,16,12,7],[1090,430,25,25,12],[1000,370,16,16,5]],
   dots:[710,210,740,221,768,221,682,284,690,291,860,292,871,282,885,300,893,316,970,352,1000,368,1015,388,998,419,677,367,715,387,761,400,790,408,924,411,1030,370,1000,366,1074,390,1085,405,1138,446,1122,462,1132,480,720,567,715,543,750,573]},
  {color:'#1b9e77', n:400,
   area:[[730,720],[800,750],[900,775],[930,720],[1060,700],[1070,740],[1060,820],[1100,900],[1050,1060],[980,1090],[870,1090],[780,1040],[790,980],[690,940],[700,870],[720,800]],
   blobs:[[770,772,46,10,34],[760,745,28,20,16],[750,820,35,14,24],[720,870,20,35,16],[935,750,16,36,26],[1000,730,65,35,50],[965,940,60,80,170],[975,830,30,60,70],[880,890,50,45,45],[940,1040,90,45,80],[820,940,45,45,35],[740,920,35,28,16],[820,1000,40,45,22],[1080,860,25,50,22],[670,1080,15,16,10],[1080,1045,18,10,7]],
   dots:[811,1134,1080,1185,705,1080,711,1028,724,1014,759,1015,740,1055,754,1068,756,1075,1030,1057,1045,1060,1100,1048,1065,777,697,938,860,815,882,750]},
  {color:'#d95f02', n:430,
   area:[[1120,490],[1200,500],[1300,530],[1350,590],[1440,650],[1440,740],[1450,810],[1430,880],[1380,900],[1290,880],[1200,870],[1170,940],[1190,1000],[1130,1000],[1110,920],[1080,820],[1065,710],[1100,610]],
   blobs:[[1330,710,70,50,170],[1400,700,40,50,130],[1290,725,55,25,70],[1110,690,35,75,70],[1135,830,45,45,100],[1230,820,50,45,50],[1300,810,65,20,40],[1395,790,30,55,50],[1350,885,80,20,36],[1140,950,35,55,40],[1280,535,50,12,20],[1175,510,25,18,12],[1150,560,36,12,10],[1360,640,36,16,20],[1420,910,25,25,12]],
   dots:[1439,477,1408,563,1320,543,1306,560,1146,470,1175,486,1216,944,1332,994,1266,1035,1331,1039,1346,1054,1393,1036,1238,1011,1173,1090,1183,1088,1205,1080,1213,1103,1404,978,1435,973,1435,950,1305,588,1240,590,1203,623,1175,642]},
  {color:'#e6ab02', n:240,
   area:[[1445,640],[1470,540],[1510,580],[1570,540],[1590,590],[1660,580],[1790,570],[1800,600],[1740,680],[1720,800],[1770,930],[1780,985],[1720,930],[1650,920],[1600,890],[1520,900],[1450,860],[1455,740]],
   blobs:[[1465,700,24,55,60],[1500,640,45,25,22],[1560,740,55,24,30],[1580,610,45,30,30],[1640,630,50,35,30],[1745,580,45,12,28],[1670,720,28,55,34],[1725,780,22,75,45],[1620,820,65,45,80],[1560,850,50,24,35],[1690,890,60,35,50],[1740,910,36,26,20],[1780,975,15,15,10],[1730,610,36,24,16],[1806,730,18,10,8],[1510,930,20,20,8]],
   dots:[1506,482,1525,510,1635,540,1572,530,1836,564,1893,620,1917,747,1820,614,1788,640,1820,648,1833,681,1851,685,1818,695,1813,784,1788,785,1794,770,1780,785,1781,733,1870,859,1819,872,1838,950,1814,968,1853,996,1861,1001,1861,1027,1836,1032,1462,1037,1491,1029,1504,1004,1568,1034,1573,1069,1517,970,1611,955,1618,967,1624,976,1639,998,1702,972,1731,998,1480,523,1478,540]}
];
let seed = 7;
const rnd = () => (seed = (seed * 16807) % 2147483647) / 2147483647;
const inside = (x, y, p) => {
  let hit = false;
  for (let i = 0, j = p.length - 1; i < p.length; j = i++)
    if ((p[i][1] > y) !== (p[j][1] > y) && x < (p[j][0] - p[i][0]) * (y - p[i][1]) / (p[j][1] - p[i][1]) + p[i][0]) hit = !hit;
  return hit;
};
const circles = [];
for (const c of clusters) {
  const put = (x, y) => circles.push(`<circle cx="${(1080 + x / 3).toFixed(1)}" cy="${(600 + y / 3).toFixed(1)}" r="3.4" fill="${c.color}"/>`);
  const xs = c.area.map(p => p[0]), ys = c.area.map(p => p[1]);
  const x0 = Math.min(...xs), x1 = Math.max(...xs), y0 = Math.min(...ys), y1 = Math.max(...ys);
  for (let k = 0; k < c.n;) {
    let x = x0 + rnd() * (x1 - x0), y = y0 + rnd() * (y1 - y0);
    const snap = rnd();
    if (snap < .3) x = Math.round(x / 34) * 34; else if (snap < .6) y = Math.round(y / 32) * 32;
    if (inside(x, y, c.area)) { put(x, y); k++; }
  }
  for (const [bx, by, rx, ry, n] of c.blobs)
    for (let k = 0; k < n; k++) {
      const a = rnd() * 6.283, r = Math.sqrt(rnd()) * (.6 + rnd() * .6);
      put(bx + Math.cos(a) * r * rx, by + Math.sin(a) * r * ry);
    }
  for (let i = 0; i < c.dots.length; i += 2) put(c.dots[i], c.dots[i + 1]);
}
document.getElementById('points').innerHTML = circles.join('');
</script>
</body>
</html>
